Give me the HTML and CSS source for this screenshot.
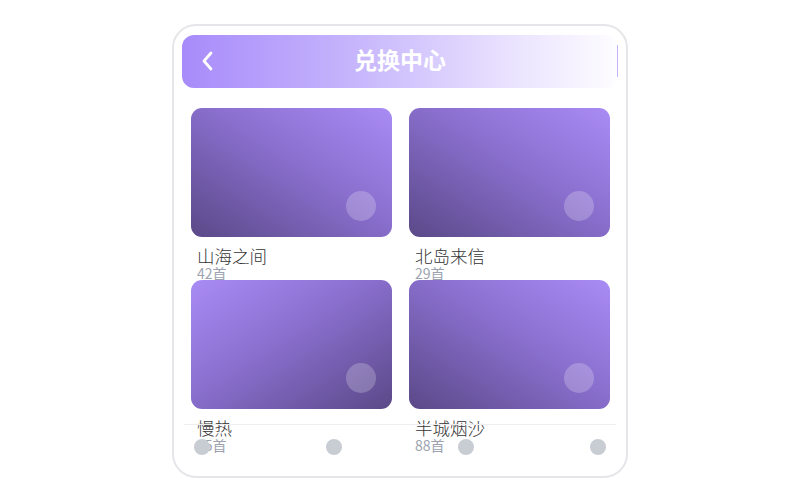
FILE: index.html
```html
<!DOCTYPE html>
<html lang="zh-CN">
  <head>
    <meta charset="UTF-8" />
    <meta name="viewport" content="width=device-width, initial-scale=1.0" />
    <title>兑换中心</title>
    <link rel="stylesheet" href="styles.css">
  </head>
  <body>
    <div class="phone">
      <div class="top-bar">
        <span class="back">
          <svg width="14" height="20" viewBox="0 0 14 20">
            <path d="M10 2 L3 10 L10 18" fill="none" stroke="#fff" stroke-width="2.8" stroke-linecap="round" stroke-linejoin="round" />
          </svg>
        </span>
        <h1>兑换中心</h1>
        <span class="edge"></span>
      </div>

      <div class="album-grid">
        <div class="album">
          <div class="cover cover-a"><span class="play"></span></div>
          <div class="album-name">山海之间</div>
          <div class="album-count">42首</div>
        </div>
        <div class="album">
          <div class="cover cover-a"><span class="play"></span></div>
          <div class="album-name">北岛来信</div>
          <div class="album-count">29首</div>
        </div>
        <div class="album">
          <div class="cover cover-b"><span class="play"></span></div>
          <div class="album-name">慢热</div>
          <div class="album-count">25首</div>
        </div>
        <div class="album">
          <div class="cover cover-a"><span class="play"></span></div>
          <div class="album-name">半城烟沙</div>
          <div class="album-count">88首</div>
        </div>
      </div>

      <div class="tab-bar">
        <span class="dot"></span>
        <span class="dot"></span>
        <span class="dot"></span>
        <span class="dot"></span>
      </div>
    </div>
  </body>
</html>
```

FILE: styles.css
```css
body {
  margin: 0;
  font-family: "Noto Sans CJK SC", "Noto Sans", sans-serif;
  background-color: #fff;
  color: #333;
}

.phone {
  position: relative;
  width: 452px;
  height: 450px;
  margin: 24px auto 0;
  border: 2px solid #e6e6ea;
  border-radius: 24px;
  overflow: hidden;
  background-color: #fff;
}

.top-bar {
  display: flex;
  align-items: center;
  height: 53px;
  margin: 9px 8px 0;
  padding: 0 0 0 19px;
  border-radius: 12px;
  background: linear-gradient(to right, #a78bfa, #c7b6fc 40%, #e9e2fe 75%, #fefdff);
}

.top-bar .back {
  display: flex;
  width: 14px;
  height: 20px;
  margin-top: -2px;
}

.top-bar h1 {
  flex: 1;
  margin: 0;
  padding: 0 32px 6px 0;
  text-align: center;
  font-size: 23px;
  line-height: 24px;
  font-weight: bold;
  color: #fff;
}

.top-bar .edge {
  width: 1px;
  height: 32px;
  margin-top: -2px;
  background-color: #c6b4fb;
}

.album-grid {
  display: grid;
  grid-template-columns: 1fr 1fr;
  column-gap: 17px;
  row-gap: 12px;
  padding: 20px 16px 0 17px;
}

.album {
  height: 160px;
}

.cover {
  position: relative;
  height: 129px;
  border-radius: 11px;
}

.cover-a {
  background: linear-gradient(to bottom left, #a98bf5, #8a6fce 45%, #5a4988);
}

.cover-b {
  background: linear-gradient(to bottom right, #a98bf5, #8a6fce 45%, #5a4988);
}

.cover .play {
  position: absolute;
  right: 16px;
  bottom: 16px;
  width: 30px;
  height: 30px;
  border-radius: 50%;
  background-color: rgba(255, 255, 255, 0.22);
}

.album-name {
  margin-top: 9px;
  padding: 0 6px;
  font-size: 17.5px;
  line-height: 20px;
  font-weight: 300;
  color: #333;
}

.album-count {
  padding: 0 6px;
  font-size: 14px;
  line-height: 15px;
  color: #9ca3af;
}

.tab-bar {
  position: absolute;
  top: 398px;
  left: 10px;
  right: 10px;
  display: flex;
  justify-content: space-between;
  padding: 14px 10px 10px;
  border-top: 1px solid #eeeef0;
}

.tab-bar .dot {
  width: 16px;
  height: 16px;
  border-radius: 50%;
  background-color: #c8ccd3;
}
```
